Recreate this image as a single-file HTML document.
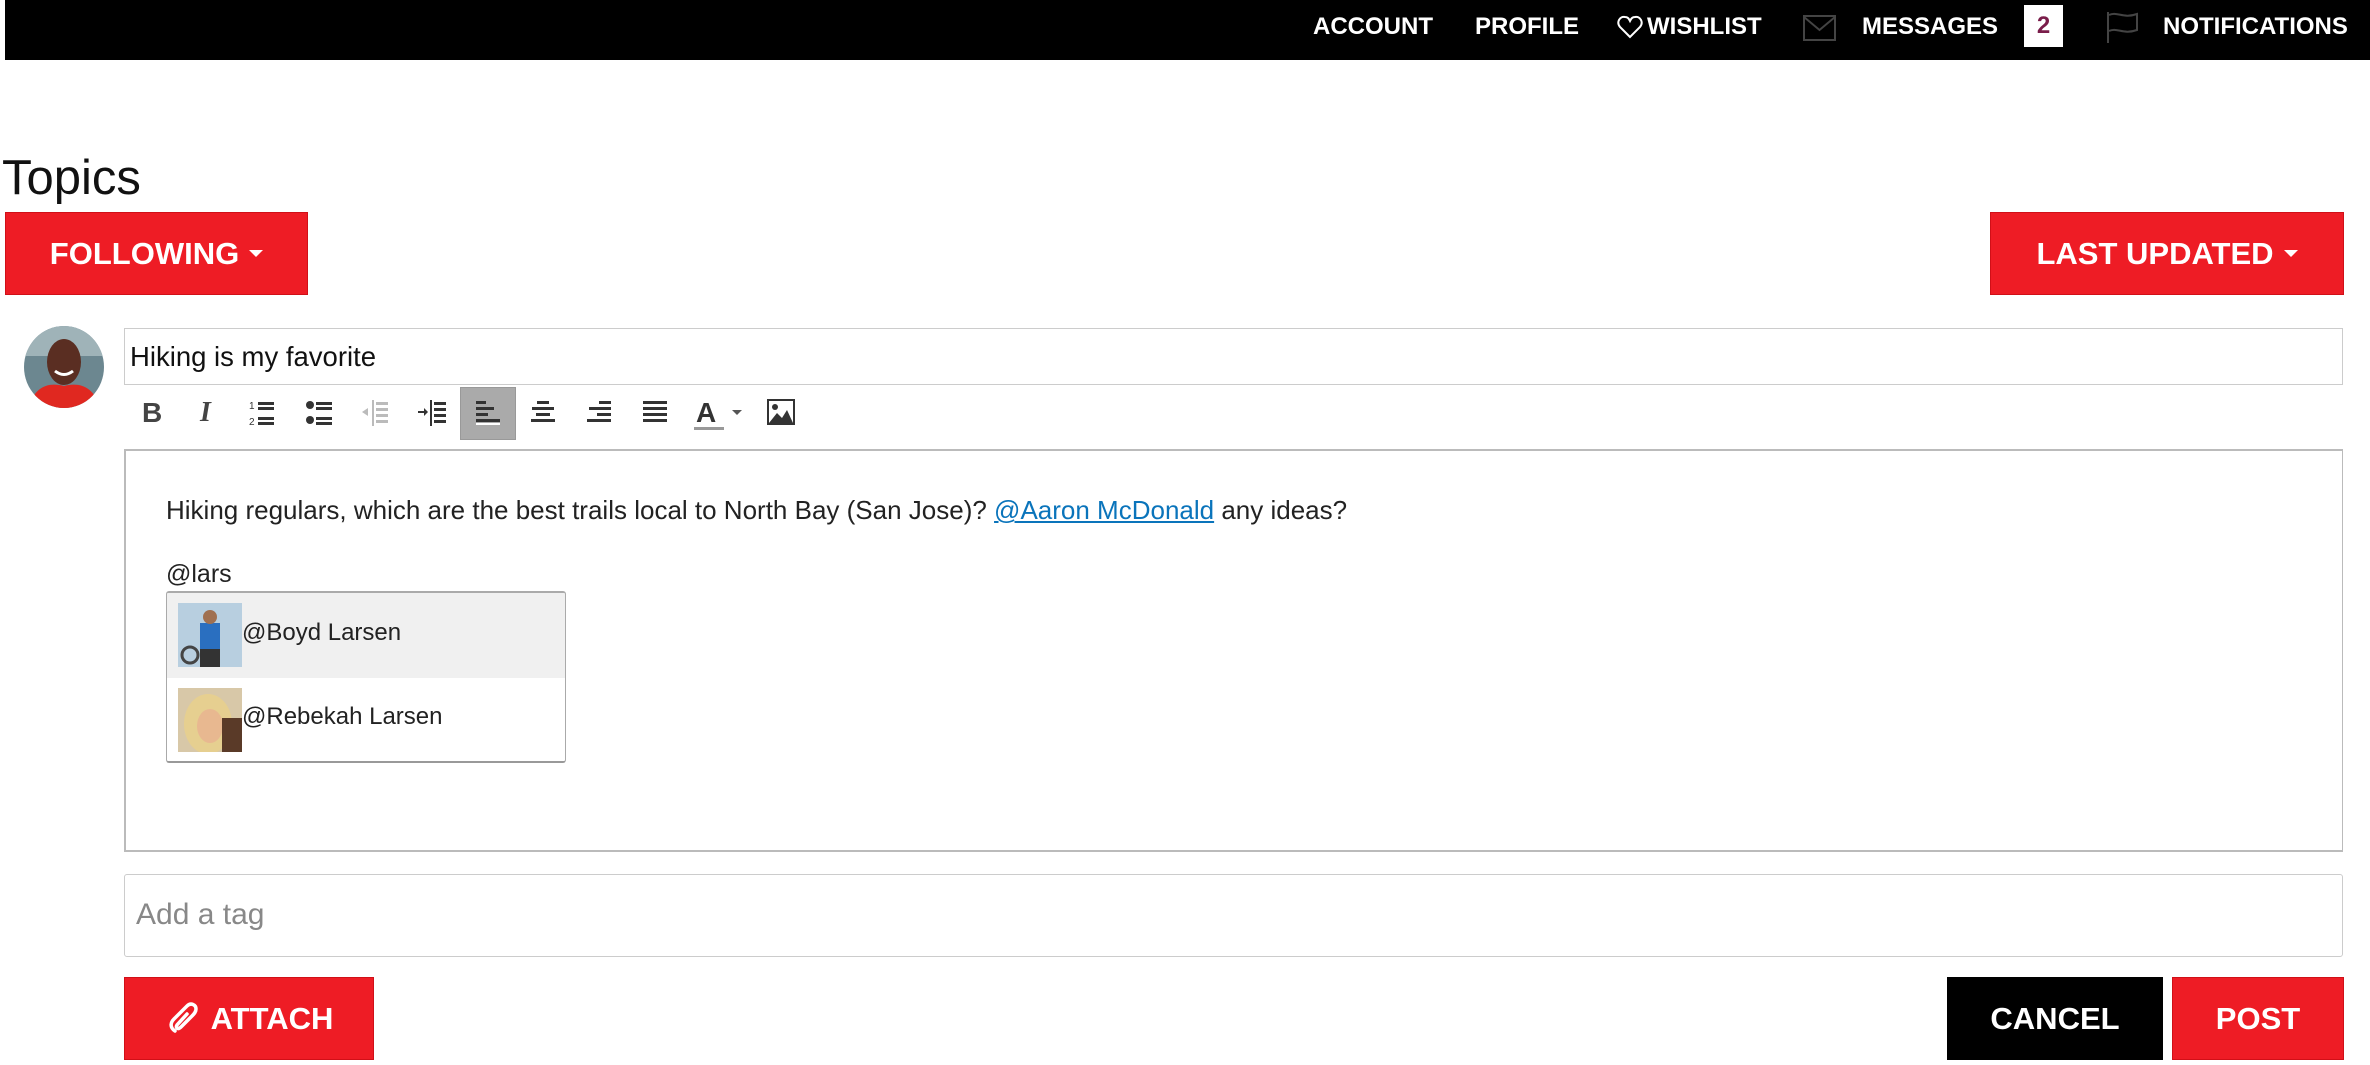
<!DOCTYPE html>
<html><head><meta charset="utf-8"><style>
*{margin:0;padding:0;box-sizing:border-box}
body{width:2370px;height:1065px;background:#fff;font-family:"Liberation Sans",Arial,sans-serif;position:relative;overflow:hidden;color:#222}
.a{position:absolute}
.top{left:5px;top:0;width:2365px;height:60px;background:#000}
.nav{color:#fff;font-weight:bold;font-size:24px;top:13px}
.btn{background:#ee1c25;color:#fff;font-weight:bold;font-size:31px;display:flex;align-items:center;justify-content:center;border:1px solid #d01018}
.caret{display:inline-block;width:0;height:0;border-left:7px solid transparent;border-right:7px solid transparent;border-top:7px solid #fff;margin-left:10px;vertical-align:middle}
.ic{position:absolute;top:397px}
</style></head><body>
<div class="a top"></div>
<div class="a nav" style="left:1313px">ACCOUNT</div>
<div class="a nav" style="left:1475px">PROFILE</div>
<svg class="a" style="left:1617px;top:15px" width="26" height="24" viewBox="0 0 26 24"><path d="M13 22 L3 12 C-1 7 3 1 8 2 C11 2 12 4 13 6 C14 4 15 2 18 2 C23 1 27 7 23 12 Z" fill="none" stroke="#fff" stroke-width="2"/></svg>
<div class="a nav" style="left:1647px">WISHLIST</div>
<svg class="a" style="left:1803px;top:14px" width="33" height="28" viewBox="0 0 33 28"><rect x="1" y="2" width="31" height="24" fill="none" stroke="#444" stroke-width="2"/><path d="M1 3 L16.5 16 L32 3" fill="none" stroke="#444" stroke-width="2"/></svg>
<div class="a nav" style="left:1862px">MESSAGES</div>
<div class="a" style="left:2024px;top:5px;width:39px;height:42px;background:#fff;color:#7a1d4a;font-weight:bold;font-size:24px;text-align:center;line-height:42px">2</div>
<svg class="a" style="left:2105px;top:10px" width="34" height="34" viewBox="0 0 34 34"><path d="M3 2 V33" stroke="#444" stroke-width="2"/><path d="M4 5 C12 1 18 9 32 4 V20 C18 25 12 17 4 21" fill="none" stroke="#444" stroke-width="2"/></svg>
<div class="a nav" style="left:2163px">NOTIFICATIONS</div>

<div class="a" style="left:2px;top:150px;font-size:49px;color:#111">Topics</div>
<div class="a btn" style="left:5px;top:212px;width:303px;height:83px">FOLLOWING<span class="caret"></span></div>
<div class="a btn" style="left:1990px;top:212px;width:354px;height:83px">LAST UPDATED<span class="caret"></span></div>

<svg class="a" style="left:24px;top:326px" width="80" height="82" viewBox="0 0 80 82"><defs><clipPath id="c"><ellipse cx="40" cy="41" rx="40" ry="41"/></clipPath></defs><g clip-path="url(#c)"><rect width="80" height="82" fill="#6c8790"/><rect y="0" width="80" height="30" fill="#9fb3b8"/><ellipse cx="40" cy="36" rx="17" ry="23" fill="#5a2e22"/><path d="M5 82 C10 60 25 56 40 60 C55 56 70 60 76 82Z" fill="#e02820"/><path d="M31 45 Q40 52 49 45" stroke="#fff" stroke-width="3" fill="none"/></g></svg>

<div class="a" style="left:124px;top:328px;width:2219px;height:57px;border:1px solid #ccc"></div>
<div class="a" style="left:130px;top:341px;font-size:27.5px;color:#111">Hiking is my favorite</div>

<div class="a" style="left:460px;top:387px;width:56px;height:53px;background:#aaa;border:1px solid #999"></div>
<div class="ic" style="left:142px;font-size:28px;font-weight:bold;color:#444">B</div>
<div class="ic" style="left:200px;font-size:28px;font-weight:bold;font-style:italic;color:#444;font-family:'Liberation Serif',serif">I</div>
<svg class="a" style="left:248px;top:398px" width="30" height="30" viewBox="0 0 30 30" fill="#333"><text x="1" y="11" font-size="10">1</text><text x="1" y="27" font-size="10">2</text><rect x="10" y="4" width="16" height="3"/><rect x="10" y="9" width="16" height="3"/><rect x="10" y="19" width="16" height="3"/><rect x="10" y="24" width="16" height="3"/></svg>
<svg class="a" style="left:305px;top:398px" width="30" height="30" viewBox="0 0 30 30" fill="#333"><circle cx="5" cy="7" r="4"/><circle cx="5" cy="22" r="4"/><rect x="11" y="4" width="16" height="3"/><rect x="11" y="9" width="16" height="3"/><rect x="11" y="19" width="16" height="3"/><rect x="11" y="24" width="16" height="3"/></svg>
<svg class="a" style="left:360px;top:398px" width="30" height="30" viewBox="0 0 30 30" fill="#bbb"><path d="M2 14 L8 10 V18Z"/><rect x="12" y="2" width="2" height="26"/><rect x="16" y="4" width="12" height="3"/><rect x="16" y="10" width="12" height="3"/><rect x="16" y="16" width="12" height="3"/><rect x="16" y="22" width="12" height="3"/></svg>
<svg class="a" style="left:417px;top:398px" width="30" height="30" viewBox="0 0 30 30" fill="#333"><path d="M1 13 H7 V10 L11 14 L7 18 V15 H1Z"/><rect x="13" y="2" width="2" height="26"/><rect x="17" y="4" width="12" height="3"/><rect x="17" y="10" width="12" height="3"/><rect x="17" y="16" width="12" height="3"/><rect x="17" y="22" width="12" height="3"/></svg>
<svg class="a" style="left:473px;top:398px" width="30" height="30" viewBox="0 0 30 30" fill="#333"><rect x="3" y="3" width="10" height="3"/><rect x="3" y="9" width="18" height="3"/><rect x="3" y="15" width="12" height="3"/><rect x="3" y="21" width="24" height="3" fill="#333"/><rect x="3" y="25" width="24" height="2" fill="#fff"/></svg>
<svg class="a" style="left:528px;top:398px" width="30" height="30" viewBox="0 0 30 30" fill="#333"><rect x="9" y="3" width="12" height="3"/><rect x="4" y="9" width="22" height="3"/><rect x="8" y="15" width="14" height="3"/><rect x="3" y="21" width="24" height="3"/></svg>
<svg class="a" style="left:584px;top:398px" width="30" height="30" viewBox="0 0 30 30" fill="#333"><rect x="15" y="3" width="12" height="3"/><rect x="5" y="9" width="22" height="3"/><rect x="13" y="15" width="14" height="3"/><rect x="3" y="21" width="24" height="3"/></svg>
<svg class="a" style="left:640px;top:398px" width="30" height="30" viewBox="0 0 30 30" fill="#333"><rect x="3" y="3" width="24" height="3"/><rect x="3" y="9" width="24" height="3"/><rect x="3" y="15" width="24" height="3"/><rect x="3" y="21" width="24" height="3"/></svg>
<div class="ic" style="left:696px;font-size:28px;font-weight:bold;color:#333">A</div>
<div class="a" style="left:694px;top:427px;width:30px;height:3px;background:#999"></div>
<div class="a" style="left:732px;top:410px;border-left:5px solid transparent;border-right:5px solid transparent;border-top:5px solid #555"></div>
<svg class="a" style="left:767px;top:399px" width="28" height="26" viewBox="0 0 28 26"><rect x="1" y="1" width="26" height="24" fill="#fff" stroke="#333" stroke-width="2"/><circle cx="8" cy="8" r="3" fill="#333"/><path d="M2 24 L10 14 L15 19 L20 11 L26 24Z" fill="#333"/></svg>

<div class="a" style="left:124px;top:449px;width:2219px;height:403px;border:2px solid #bbb;border-width:2px 1px 2px 2px"></div>
<div class="a" style="left:166px;top:495px;font-size:26px;color:#222">Hiking regulars, which are the best trails local to North Bay (San Jose)? <span style="color:#0a74bb;text-decoration:underline">@Aaron McDonald</span> any ideas?</div>
<div class="a" style="left:166px;top:560px;font-size:25px;color:#222">@lars</div>
<div class="a" style="left:166px;top:591px;width:400px;height:172px;border:1px solid #aaa;border-bottom:2px solid #999;border-top:2px solid #aaa;border-radius:3px;background:#fff;overflow:hidden">
 <div style="height:85px;background:#f0f0f0"></div>
</div>
<svg class="a" style="left:178px;top:603px" width="64" height="64" viewBox="0 0 64 64"><rect width="64" height="64" fill="#b8cfe0"/><rect x="22" y="20" width="20" height="26" fill="#2a6fc0"/><circle cx="32" cy="14" r="7" fill="#a07050"/><rect x="22" y="46" width="20" height="18" fill="#333"/><circle cx="12" cy="52" r="8" fill="none" stroke="#444" stroke-width="3"/></svg>
<div class="a" style="left:242px;top:619px;font-size:24px;color:#222">@Boyd Larsen</div>
<svg class="a" style="left:178px;top:688px" width="64" height="64" viewBox="0 0 64 64"><rect width="64" height="64" fill="#d8c8a8"/><ellipse cx="30" cy="36" rx="24" ry="30" fill="#e6cf90"/><ellipse cx="32" cy="38" rx="13" ry="17" fill="#e8b890"/><rect x="44" y="30" width="20" height="34" fill="#5a3a28"/></svg>
<div class="a" style="left:242px;top:703px;font-size:24px;color:#222">@Rebekah Larsen</div>

<div class="a" style="left:124px;top:874px;width:2219px;height:83px;border:1px solid #ccc;border-radius:3px"></div>
<div class="a" style="left:136px;top:898px;font-size:30px;color:#888">Add a tag</div>

<div class="a btn" style="left:124px;top:977px;width:250px;height:83px"><svg width="36" height="36" viewBox="0 0 36 36" style="margin-right:10px"><path d="M10 30 C4 26 6 21 9 18 L22 5 C26 1 31 4 31 8 C31 11 29 13 27 15 L16 26 C13 29 10 27 12 24 L22 13" fill="none" stroke="#fff" stroke-width="3.5" stroke-linecap="round"/></svg>ATTACH</div>
<div class="a btn" style="left:1947px;top:977px;width:216px;height:83px;background:#000;border-color:#000">CANCEL</div>
<div class="a btn" style="left:2172px;top:977px;width:172px;height:83px">POST</div>
</body></html>
